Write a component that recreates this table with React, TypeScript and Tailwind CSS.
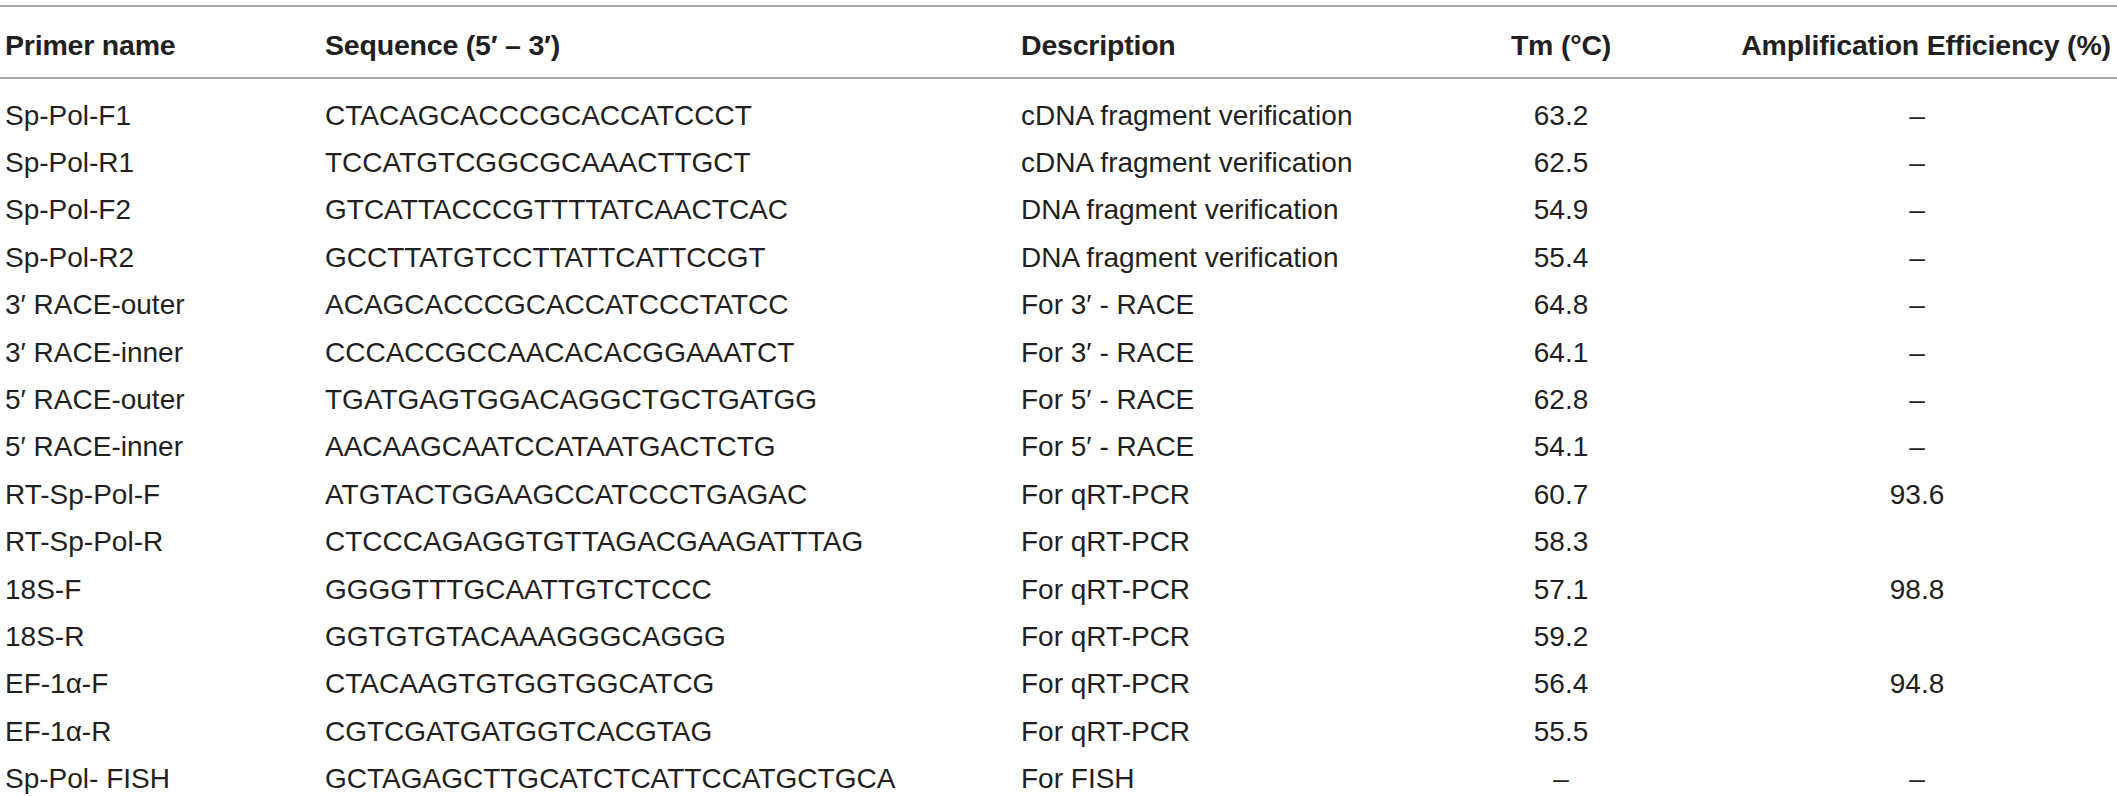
import React from 'react';

type Row = { name: string; seq: string; desc: string; tm: string; eff: string };

const rows: Row[] = [
  { name: 'Sp-Pol-F1', seq: 'CTACAGCACCCGCACCATCCCT', desc: 'cDNA fragment verification', tm: '63.2', eff: '–' },
  { name: 'Sp-Pol-R1', seq: 'TCCATGTCGGCGCAAACTTGCT', desc: 'cDNA fragment verification', tm: '62.5', eff: '–' },
  { name: 'Sp-Pol-F2', seq: 'GTCATTACCCGTTTTATCAACTCAC', desc: 'DNA fragment verification', tm: '54.9', eff: '–' },
  { name: 'Sp-Pol-R2', seq: 'GCCTTATGTCCTTATTCATTCCGT', desc: 'DNA fragment verification', tm: '55.4', eff: '–' },
  { name: '3′ RACE-outer', seq: 'ACAGCACCCGCACCATCCCTATCC', desc: 'For 3′ - RACE', tm: '64.8', eff: '–' },
  { name: '3′ RACE-inner', seq: 'CCCACCGCCAACACACGGAAATCT', desc: 'For 3′ - RACE', tm: '64.1', eff: '–' },
  { name: '5′ RACE-outer', seq: 'TGATGAGTGGACAGGCTGCTGATGG', desc: 'For 5′ - RACE', tm: '62.8', eff: '–' },
  { name: '5′ RACE-inner', seq: 'AACAAGCAATCCATAATGACTCTG', desc: 'For 5′ - RACE', tm: '54.1', eff: '–' },
  { name: 'RT-Sp-Pol-F', seq: 'ATGTACTGGAAGCCATCCCTGAGAC', desc: 'For qRT-PCR', tm: '60.7', eff: '93.6' },
  { name: 'RT-Sp-Pol-R', seq: 'CTCCCAGAGGTGTTAGACGAAGATTTAG', desc: 'For qRT-PCR', tm: '58.3', eff: '' },
  { name: '18S-F', seq: 'GGGGTTTGCAATTGTCTCCC', desc: 'For qRT-PCR', tm: '57.1', eff: '98.8' },
  { name: '18S-R', seq: 'GGTGTGTACAAAGGGCAGGG', desc: 'For qRT-PCR', tm: '59.2', eff: '' },
  { name: 'EF-1α-F', seq: 'CTACAAGTGTGGTGGCATCG', desc: 'For qRT-PCR', tm: '56.4', eff: '94.8' },
  { name: 'EF-1α-R', seq: 'CGTCGATGATGGTCACGTAG', desc: 'For qRT-PCR', tm: '55.5', eff: '' },
  { name: 'Sp-Pol- FISH', seq: 'GCTAGAGCTTGCATCTCATTCCATGCTGCA', desc: 'For FISH', tm: '–', eff: '–' },
];

// column template shared by header and body
const cols = 'grid grid-cols-[320px_696px_436px_208px_1fr] pl-[5px]';

export default function App() {
  return (
    <div className="w-[2117px] h-[796px] overflow-hidden bg-white text-[#231f20] font-['Liberation_Sans',Arial,sans-serif] text-[28px] leading-none">
      <div className="mt-[5px] border-t-2 border-b-2 border-[#a8a8a8]">
        <div className={`${cols} h-[70px] pt-[6px] items-center font-bold text-[28.5px] tracking-[-0.2px]`}>
          <div>Primer name</div>
          <div>Sequence (5′ – 3′)</div>
          <div>Description</div>
          <div className="text-center">Tm (°C)</div>
          <div className="pl-[70px] text-center whitespace-nowrap">Amplification Efficiency (%)</div>
        </div>
      </div>
      <div className="pt-[13px]">
        {rows.map((r) => (
          <div key={r.name} className={`${cols} h-[47.4px] items-center`}>
            <div>{r.name}</div>
            <div>{r.seq}</div>
            <div>{r.desc}</div>
            <div className="text-center">{r.tm}</div>
            <div className="pl-[52px] text-center">{r.eff}</div>
          </div>
        ))}
      </div>
    </div>
  );
}
